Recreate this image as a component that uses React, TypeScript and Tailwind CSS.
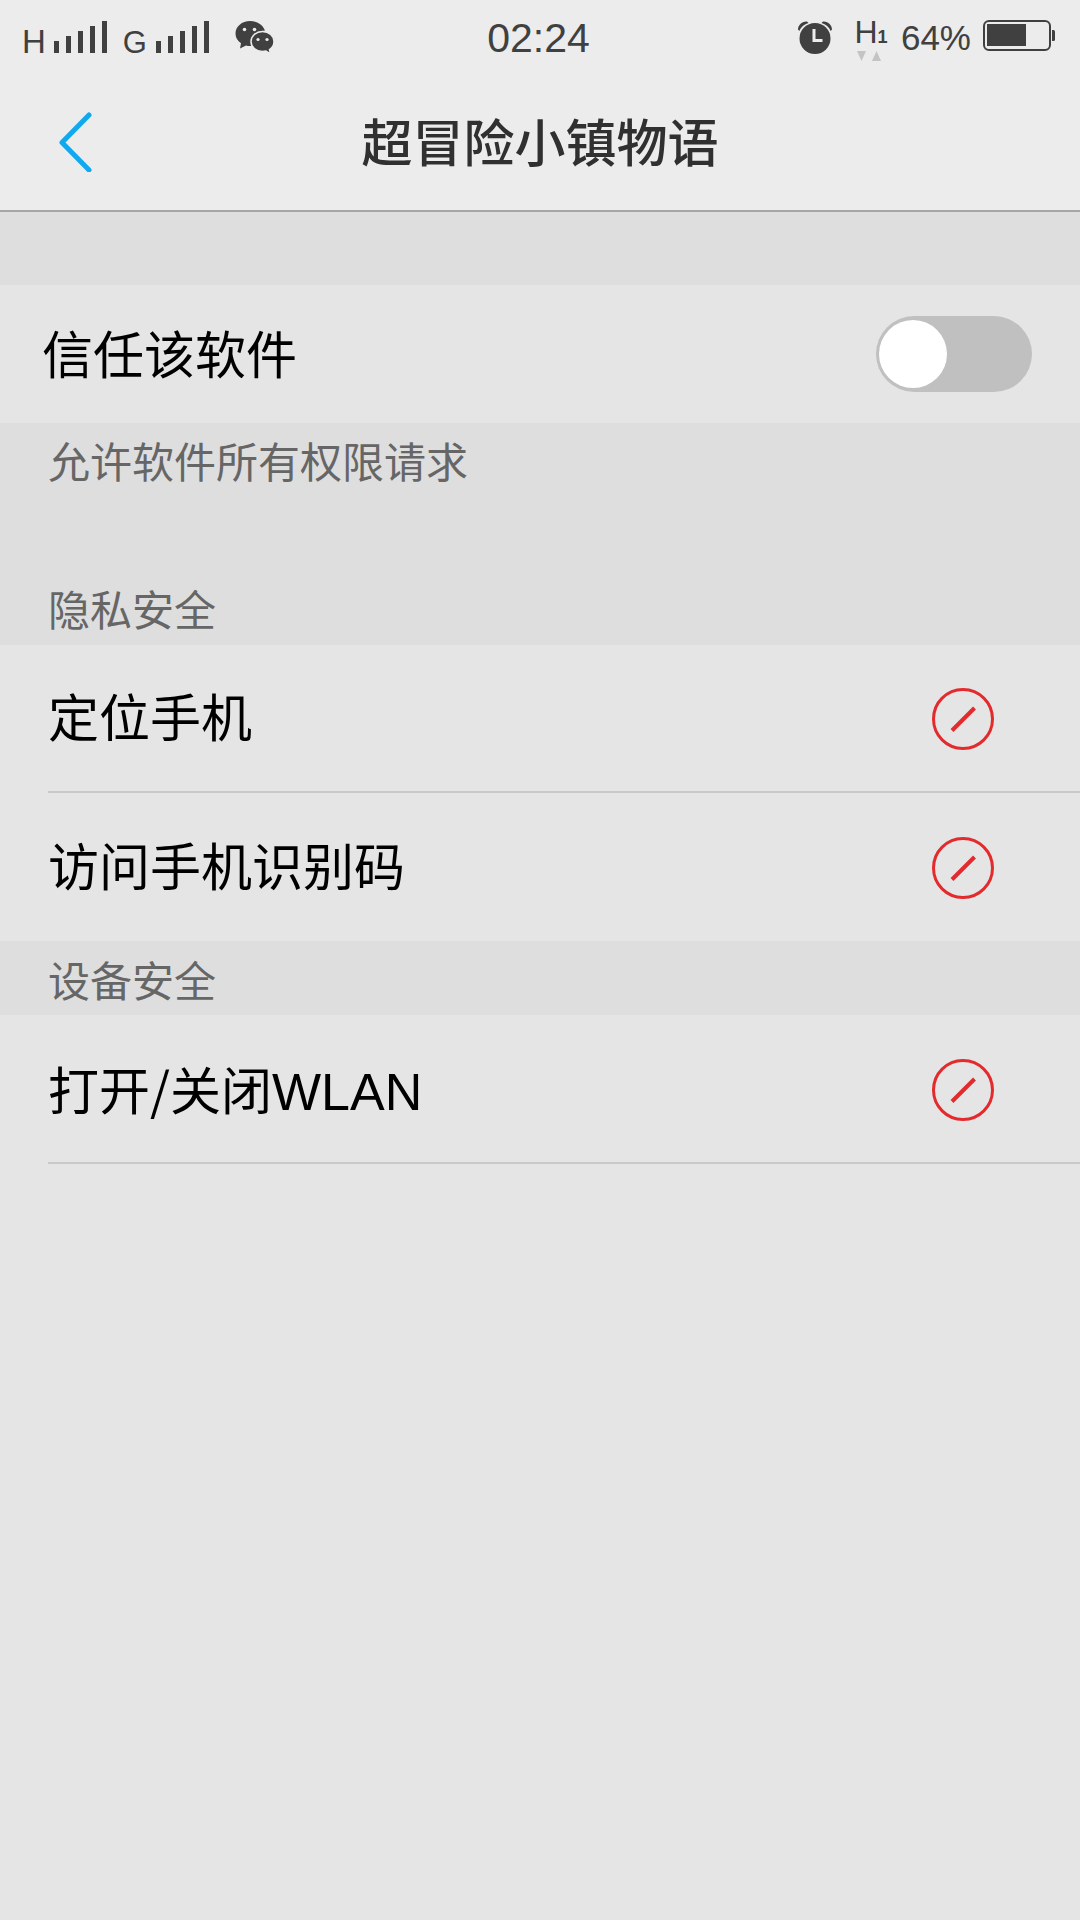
import type { ReactNode } from "react";

const cjk = { fontFamily: '"Liberation Sans", "Noto Sans CJK SC", sans-serif' };

const Signal = () => (
  <svg width="53" height="33" viewBox="0 0 53 33" fill="#404040">
    <rect x="0" y="20" width="5" height="12" />
    <rect x="12" y="15" width="5" height="17" />
    <rect x="24" y="10" width="5" height="22" />
    <rect x="36" y="5" width="5" height="27" />
    <rect x="48" y="0" width="5" height="32" />
  </svg>
);

const WeChat = () => (
  <svg width="40" height="34" viewBox="0 0 40 34" fill="#404040">
    <path d="M15 0C7 0 0.5 5.500 0.500 12.500c0 4 2 7.400 5.500 9.700L5 27.500l6-3c1.300 0.400 2.600 0.600 4 0.600 0.500 0 1 0 1.500-0.100-0.400-1.200-0.600-2.400-0.600-3.700 0-6.500 6-11.600 13.500-11.600l0.500 0C28.200 3.800 22.200 0 15 0z" />
    <path stroke="#ececec" strokeWidth="1.500" d="M27.500 10.500c-6.600 0-11.500 4.500-11.500 10s4.900 10 11.500 10c1.200 0 2.300-0.200 3.400-0.500l4.600 3-1-4.400c2.800-1.900 4.500-4.800 4.500-8.100 0-5.500-4.900-10-11.500-10z" />
    <circle cx="9.500" cy="8.500" r="1.800" fill="#ececec" />
    <circle cx="19.500" cy="8.500" r="1.800" fill="#ececec" />
    <circle cx="23" cy="18.500" r="1.600" fill="#ececec" />
    <circle cx="32" cy="18.500" r="1.600" fill="#ececec" />
  </svg>
);

const Alarm = () => (
  <svg width="36" height="34" viewBox="0 0 36 34">
    <circle cx="18" cy="18.500" r="15.500" fill="#404040" />
    <path d="M1 9.500C1 5 5 1 10 1.500l1.500 1.500C7 4.500 4 7 2.300 11z" fill="#404040" />
    <path d="M35 9.500C35 5 31 1 26 1.500L24.500 3C29 4.500 32 7 33.700 11z" fill="#404040" />
    <path d="M17 9v11.500h8.500" fill="none" stroke="#ececec" strokeWidth="3" />
  </svg>
);

const Battery = () => (
  <svg width="72" height="31" viewBox="0 0 72 31" fill="none">
    <rect x="1" y="1" width="66" height="29" rx="5" stroke="#404040" strokeWidth="2" />
    <rect x="4" y="4" width="39" height="22" fill="#404040" />
    <path d="M69 10h1.500a1.500 1.500 0 0 1 1.500 1.500v8a1.500 1.500 0 0 1-1.500 1.500H69z" fill="#404040" />
  </svg>
);

const Deny = () => (
  <svg width="64" height="64" viewBox="0 0 64 64" fill="none" stroke="#e32a2c" className="mt-[1px]">
    <circle cx="32" cy="32" r="29.500" strokeWidth="3" />
    <path d="M21 43.500 43.500 21" strokeWidth="4" />
  </svg>
);

const SectionLabel = ({ text, className }: { text: string; className: string }) => (
  <div className={`bg-[#dedede] pl-[48px] flex items-end text-[42px] leading-none text-[#666666] ${className}`}>
    {text}
  </div>
);

const Row = ({ children, divider, className }: { children: ReactNode; divider?: boolean; className: string }) => (
  <div className={`ml-[48px] pr-[85px] flex items-center justify-between ${divider ? "border-b-2 border-[#c9c9c9]" : ""} ${className}`}>
    <span className="text-[51px] leading-none text-black mt-[2px]">{children}</span>
    <Deny />
  </div>
);

const App = () => {
  return (
    <div className="w-[1080px] h-[1920px] overflow-hidden bg-[#e5e5e5] flex flex-col" style={cjk}>
      <header className="h-[212px] bg-[#ececec] border-b-2 border-[#a6a6a6] flex flex-col shrink-0">
        <div className="h-[70px] pt-[20px] pl-[22px] pr-[25px] grid grid-cols-3 items-start">
          <div className="flex items-start">
            <span className="text-[33px] leading-none mt-[5px] text-[#404040]">H</span>
            <div className="ml-[8px] mt-[1px]"><Signal /></div>
            <span className="ml-[16px] text-[31px] leading-none mt-[7px] text-[#404040]">G</span>
            <div className="ml-[9px] mt-[1px]"><Signal /></div>
            <div className="ml-[26px] mt-[1px]"><WeChat /></div>
          </div>
          <div className="text-center text-[41px] leading-none -mt-[2px] text-[#404040]">02:24</div>
          <div className="flex items-start justify-end">
            <Alarm />
            <div className="ml-[22px] w-[32px] flex flex-col items-center">
              <span className="text-[32px] leading-[24px] text-[#404040]">H<span className="text-[18px] font-bold">1</span></span>
              <svg width="28" height="10" viewBox="0 0 28 10" className="mt-[2px] -ml-[3px]" fill="#c4c4c4">
                <path d="M2 0h9L6.500 10z" />
                <path d="M21.500 0l4.500 10h-9z" />
              </svg>
            </div>
            <span className="ml-[14px] text-[35px] leading-none text-[#404040]">64%</span>
            <div className="ml-[12px]"><Battery /></div>
          </div>
        </div>
        <div className="relative flex-1 flex items-center justify-center">
          <svg className="absolute left-[58px] top-[42px]" width="34" height="60" viewBox="0 0 34 60" fill="none">
            <path d="M31 3 4 30.500 31 58" stroke="#10a8ee" strokeWidth="5" strokeLinecap="round" strokeLinejoin="round" />
          </svg>
          <h1 className="text-[51px] leading-none font-medium text-[#303030] mt-[8px]">超冒险小镇物语</h1>
        </div>
      </header>
      <div className="h-[73px] bg-[#dedede] shrink-0" />
      <div className="h-[138px] shrink-0 pl-[42px] pr-[48px] flex items-center justify-between">
        <span className="text-[51px] leading-none text-black mt-[4px]">信任该软件</span>
        <div className="w-[156px] h-[76px] rounded-full bg-[#c0c0c0] pl-[3px] flex items-center">
          <div className="w-[68px] h-[68px] rounded-full bg-white" />
        </div>
      </div>
      <div className="h-[222px] shrink-0 bg-[#dedede] pl-[48px] flex flex-col justify-between text-[42px] leading-none text-[#666666]">
        <span className="mt-[20px]">允许软件所有权限请求</span>
        <span className="mb-[12px]">隐私安全</span>
      </div>
      <Row divider className="h-[148px]">定位手机</Row>
      <Row className="h-[148px]">访问手机识别码</Row>
      <SectionLabel text="设备安全" className="h-[74px] pb-[11px]" />
      <Row divider className="h-[149px] pt-[2px]">
        <span className="font-['Noto_Sans_CJK_SC']">打开/关闭</span>
        <span className="text-[52px]">WLAN</span>
      </Row>
    </div>
  );
};

export default App;
